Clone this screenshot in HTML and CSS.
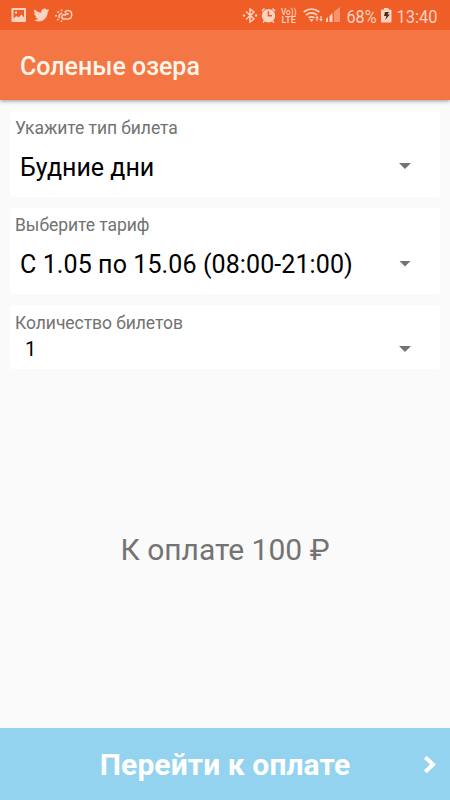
FILE: index.html
```html
<!DOCTYPE html>
<html lang="ru">
<head>
<meta charset="utf-8">
<title>Соленые озера</title>
<link rel="stylesheet" href="styles.css">
</head>
<body>
<div class="status">
  <svg class="status-icons" width="450" height="30" viewBox="0 0 450 30">
    <g fill="#fcd2c1">
      <path fill-rule="evenodd" d="M12.500 8h12.500q1 0 1 1v12q0 1-1 1h-12.500q-1 0-1-1v-12q0-1 1-1zM13.500 10v8.500l3-2.500 2 1.500 3-3 2.500 3v-7.500zM15 11.500h2v2h-2z"/>
      <path transform="translate(33.500 7.200) scale(.66)" d="M23.950 4.570a10 10 0 0 1-2.820.77 4.960 4.960 0 0 0 2.160-2.720 9.900 9.900 0 0 1-3.120 1.180 4.920 4.920 0 0 0-8.380 4.480C7.690 8.100 4.070 6.130 1.640 3.160a4.920 4.920 0 0 0 1.520 6.570 4.900 4.900 0 0 1-2.230-.61v.06a4.920 4.920 0 0 0 3.950 4.830 5 5 0 0 1-2.210.08 4.940 4.940 0 0 0 4.600 3.420A9.870 9.870 0 0 1 0 19.540a13.990 13.990 0 0 0 7.550 2.210c9.050 0 14-7.500 14-13.980l-.02-.63a9.940 9.940 0 0 0 2.420-2.570z"/>
      <path d="M326 22v-3l2-2v5zM329.500 22v-6l3-3v9z"/>
      <path opacity=".45" d="M334 22v-10.500l6-4.500v15z"/>
      <circle cx="244" cy="15.500" r="1.200"/><circle cx="256" cy="15.500" r="1.200"/>
      <path fill-rule="evenodd" d="M268.500 9a6.700 6.700 0 1 1 0 13.400 6.700 6.700 0 0 1 0-13.400zm-.8 2.200v5.200h4.300v-1.400h-2.800v-3.800z"/>
      <path d="M382 9.500h2v-1.500h4.500v1.500h2q1 0 1 1v11q0 1-1 1h-8.500q-1 0-1-1v-11q0-1 1-1z"/>
    </g>
    <g fill="none" stroke="#fcd2c1" stroke-width="1.500">
      <path d="M59.800 18a2.700 2.700 0 0 1 2.600-4.500M57 15.800h-1.800M58.800 12.700l-1.300-1.300M61.500 11.300v-1.800M58.500 19l-1.200 1.200M61.500 20.500v1.500"/>
      <path d="M68.500 14.500c-1-1.300-3-.9-3.300.5-2-.6-3.300.4-3.300 1.900 0 1.300 1 2.100 2.300 2.100h3.600c5 0 5.300-8.500.3-8.600-1.600 0-2.800.9-3.200 2.300"/>
      <path d="M246 11.500l8 7.500-4 3v-13l4 3-8 7.500"/>
      <path d="M262 11l2.500-2.500M275 11l-2.500-2.500M264.500 21l-1.500 1.500M272.500 21l1.500 1.500"/>
      <path d="M303.700 12q7.800-6 15.600 0M306 15q5.500-4.200 11 0M308.600 17.800q2.900-2 5.800 0" stroke-width="1.700"/>
      <path d="M317 21v-4M321 16v4" stroke-width="1.200"/>
    </g>
    <path fill="#fcd2c1" d="M309.300 19.300h4.400l-2.200 2.700zM315 18.200l2-2.400 2 2.400zM319 19l2 2.400 2-2.400z"/>
    <path fill="#512817" d="M385 12h4l-1.500 2.500h2.300l-4.600 5.500 1.200-4h-2.400z"/>
    <g fill="#fcd2c1" font-family="Roboto, sans-serif">
      <text x="281" y="14.500" font-size="8.500" font-weight="500" textLength="15.500" lengthAdjust="spacingAndGlyphs">Vo))</text>
      <text x="281.500" y="23" font-size="9" font-weight="500" textLength="14.500" lengthAdjust="spacingAndGlyphs">LTE</text>
      <text x="346.500" y="22.500" font-size="18.500" textLength="30" lengthAdjust="spacingAndGlyphs">68%</text>
      <text x="396.500" y="22.500" font-size="18.500" textLength="41" lengthAdjust="spacingAndGlyphs">13:40</text>
    </g>
  </svg>
</div>
<header class="toolbar"><h1>Соленые озера</h1></header>
<main class="content">
  <section class="card">
    <div class="label">Укажите тип билета</div>
    <div class="select"><span>Будние дни</span><i class="arrow"></i></div>
  </section>
  <section class="card">
    <div class="label">Выберите тариф</div>
    <div class="select tariff"><span>С 1.05 по 15.06 (08:00-21:00)</span><i class="arrow"></i></div>
  </section>
  <section class="card card-small">
    <div class="label">Количество билетов</div>
    <div class="select"><span>1</span><i class="arrow"></i></div>
  </section>
  <div class="total">К оплате 100 ₽</div>
</main>
<div class="pay">
  <span>Перейти к оплате</span>
  <svg class="chevron" width="14" height="20" viewBox="0 0 14 20"><path d="M2.300 2.300l7.700 7.200-7.700 7.200" fill="none" stroke="#fff" stroke-width="4"/></svg>
</div>
</body>
</html>
```

FILE: styles.css
```css
* { box-sizing: border-box; }
body {
  margin: 0;
  width: 450px;
  height: 800px;
  display: flex;
  flex-direction: column;
  overflow: hidden;
  background: #fafafa;
  font-family: Roboto, sans-serif;
}
.status { position: relative; z-index: 1; height: 30px; background: #f05e27; flex: none; }
.status-icons { display: block; }
.toolbar {
  height: 70px;
  flex: none;
  display: flex;
  align-items: center;
  padding: 2px 20px 0;
  background: #f57645;
  box-shadow: 0 1px 4px rgba(0, 0, 0, .4);
}
.toolbar h1 { margin: 0; font-size: 25px; font-weight: 500; color: #fff5e9; white-space: nowrap; }
.content {
  flex: 1;
  display: flex;
  flex-direction: column;
  gap: 11px;
  padding: 10px 10px 0;
}
.card { height: 86.500px; flex: none; background: #fff; border-radius: 3px; padding: 7.750px 5px 0; }
.label {
  height: 21px;
  line-height: 21px;
  font-size: 17.500px;
  letter-spacing: -.05px;
  color: #727272;
  white-space: nowrap;
}
.select {
  height: 56.500px;
  display: flex;
  align-items: center;
  justify-content: space-between;
  padding: 0 24px 0 5px;
  font-size: 25px;
  color: #000;
  white-space: nowrap;
}
.tariff { letter-spacing: .1px; }
.arrow {
  width: 12px;
  height: 6px;
  margin-bottom: 2px;
  background: #737373;
  clip-path: polygon(0 0, 100% 0, 50% 100%);
}
.card-small { height: 64px; }
.card-small .select { height: 30.500px; padding-left: 10px; font-size: 20px; }
.card-small .arrow { margin-bottom: 0; }
.total { margin-top: 152px; text-align: center; font-size: 30px; line-height: 36px; color: #737373; }
.pay {
  height: 72.500px;
  flex: none;
  position: relative;
  display: flex;
  align-items: center;
  justify-content: center;
  padding-top: 2px;
  background: #93d3ef;
  color: #fff;
  font-size: 30px;
  font-weight: 700;
  letter-spacing: .1px;
}
.chevron { position: absolute; left: 423px; top: 27px; }
```
